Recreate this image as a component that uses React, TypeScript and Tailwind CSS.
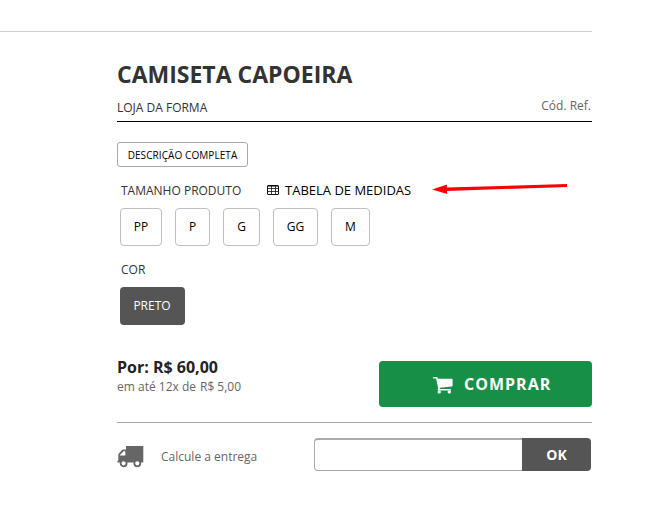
import type { ReactNode } from "react";

const sizes = [
  { label: "PP", width: "w-[42px]" },
  { label: "P", width: "w-[35px]" },
  { label: "G", width: "w-[37px]" },
  { label: "GG", width: "w-[45px]" },
  { label: "M", width: "w-[39px]" },
];

function TableIcon() {
  return (
    <svg width="12" height="10" viewBox="0 0 12 10" fill="none" stroke="#111">
      <rect x="0.5" y="0.5" width="11" height="9" rx="0.5" />
      <path d="M1 1.2H11" strokeWidth="0.8" />
      <path d="M1 3.5H11M1 6.5H11M4.5 1V9M8.5 1V9" strokeWidth="0.8" />
    </svg>
  );
}

function CartIcon() {
  return (
    <svg width="20" height="17" viewBox="0 0 20 17" fill="#fff">
      <path d="M.7 0H3.6Q4.4 0 4.6.8L4.8 1.8H18.8Q19.6 1.8 19.6 2.6V8.6Q19.6 9.3 18.8 9.4L6.6 10.8L6.8 12H17.3Q18 12 18 12.8T17.3 13.6H5.4Q4.7 13.6 4.7 12.8L5.2 11.3L3.1 1.6H.7Q0 1.6 0 .8T.7 0Z" />
      <circle cx="6.2" cy="14.9" r="1.7" />
      <circle cx="16.3" cy="14.9" r="1.7" />
    </svg>
  );
}

function TruckIcon() {
  return (
    <svg width="27" height="22" viewBox="0 0 27 22">
      <path
        fill="#666"
        fillRule="evenodd"
        d="M9 0H26.3V16.6H0.4V15.3L1.3 14.6V9Q1.3 8 2 7.2L4.8 4.2Q5.5 3.5 6.3 3.5H9ZM3 9.5H8.3V5.3H6.5L3 8.9Z"
      />
      <circle cx="6.6" cy="17.3" r="3" fill="#fff" stroke="#666" strokeWidth="1.8" />
      <circle cx="20.3" cy="17.3" r="3" fill="#fff" stroke="#666" strokeWidth="1.8" />
    </svg>
  );
}

function OptionBox({ width, children }: { width: string; children: ReactNode }) {
  return (
    <button className={`${width} h-[38px] rounded-[4px] border border-[#bfbfbf] text-[12px] text-black`}>
      {children}
    </button>
  );
}

export default function App() {
  return (
    <div className="relative h-[514px] w-[664px] overflow-hidden bg-white font-['Open_Sans','Noto_Sans',sans-serif] text-[12px] whitespace-nowrap">
      <div className="h-8 w-[592px] border-b border-[#d0d0d0]" />
      <main className="ml-[117px] w-[475px]">
        <header className="h-[90px] border-b border-black pt-[26px]">
          <h1 className="text-[23px] leading-8 font-bold text-[#333]">CAMISETA CAPOEIRA</h1>
          <div className="mt-[9px] flex justify-between leading-[18px] text-[#333]">
            <span>LOJA DA FORMA</span>
            <span className="-mt-[2px] pr-px text-[#666]">Cód. Ref.</span>
          </div>
        </header>

        <button className="mt-5 block h-[25px] w-[131px] rounded-[3px] border border-[#aaa] pt-px text-[10px] font-medium tracking-[0.08px] text-black">
          DESCRIÇÃO COMPLETA
        </button>

        <section className="ml-[3px]">
          <div className="mt-[14px] flex h-[18px] items-center text-[#333]">
            <span className="w-[147px] pt-[2px] pl-px">TAMANHO PRODUTO</span>
            <TableIcon />
            <span className="ml-[6px] pt-[2px] text-[13px] text-black">TABELA DE MEDIDAS</span>
          </div>
          <div className="mt-[9px] flex gap-[13px]">
            {sizes.map((size) => (
              <OptionBox key={size.label} width={size.width}>
                {size.label}
              </OptionBox>
            ))}
          </div>
          <div className="mt-[15px] h-[18px] pl-px leading-[18px] text-[#333]">COR</div>
          <button className="mt-2 block h-[38px] w-[65px] rounded-[4px] bg-[#555] pr-px text-white">PRETO</button>
        </section>

        <section className="mt-[31px] flex h-[67px] justify-between border-b border-[#aaa]">
          <div className="text-[#666]">
            <div className="text-[16px] leading-[22px] font-bold text-[#222]">Por: R$ 60,00</div>
            <div className="leading-[18px]">
              <span>em até 12x de</span>
              <span className="ml-1">R$ 5,00</span>
            </div>
          </div>
          <button className="mt-[5px] flex h-[46px] w-[213px] items-center rounded-[4px] bg-[#178f46] pl-[54px] text-[16px] font-bold tracking-[1px] text-white">
            <span className="mt-[2px]">
              <CartIcon />
            </span>
            <span className="ml-[11px]">COMPRAR</span>
          </button>
        </section>

        <section className="mt-[15px] flex h-[33px] items-center text-[#666]">
          <div className="mt-1 w-[44px]">
            <TruckIcon />
          </div>
          <span className="mt-1 w-[153px]">Calcule a entrega</span>
          <input className="h-[33px] w-[208px] rounded-l-[4px] border border-t-2 border-r-0 border-[#aaa] bg-white outline-none" />
          <button className="h-[33px] w-[69px] rounded-r-[4px] bg-[#555] text-[14px] font-bold text-white">OK</button>
        </section>
      </main>

      <svg className="absolute top-[180px] left-[428px]" width="144" height="18" viewBox="428 180 144 18">
        <path d="M432 189.4L447 184.5L446.8 187.4L567 184.1V187L447 190.9L447.2 194Z" fill="#f00" />
      </svg>
    </div>
  );
}
